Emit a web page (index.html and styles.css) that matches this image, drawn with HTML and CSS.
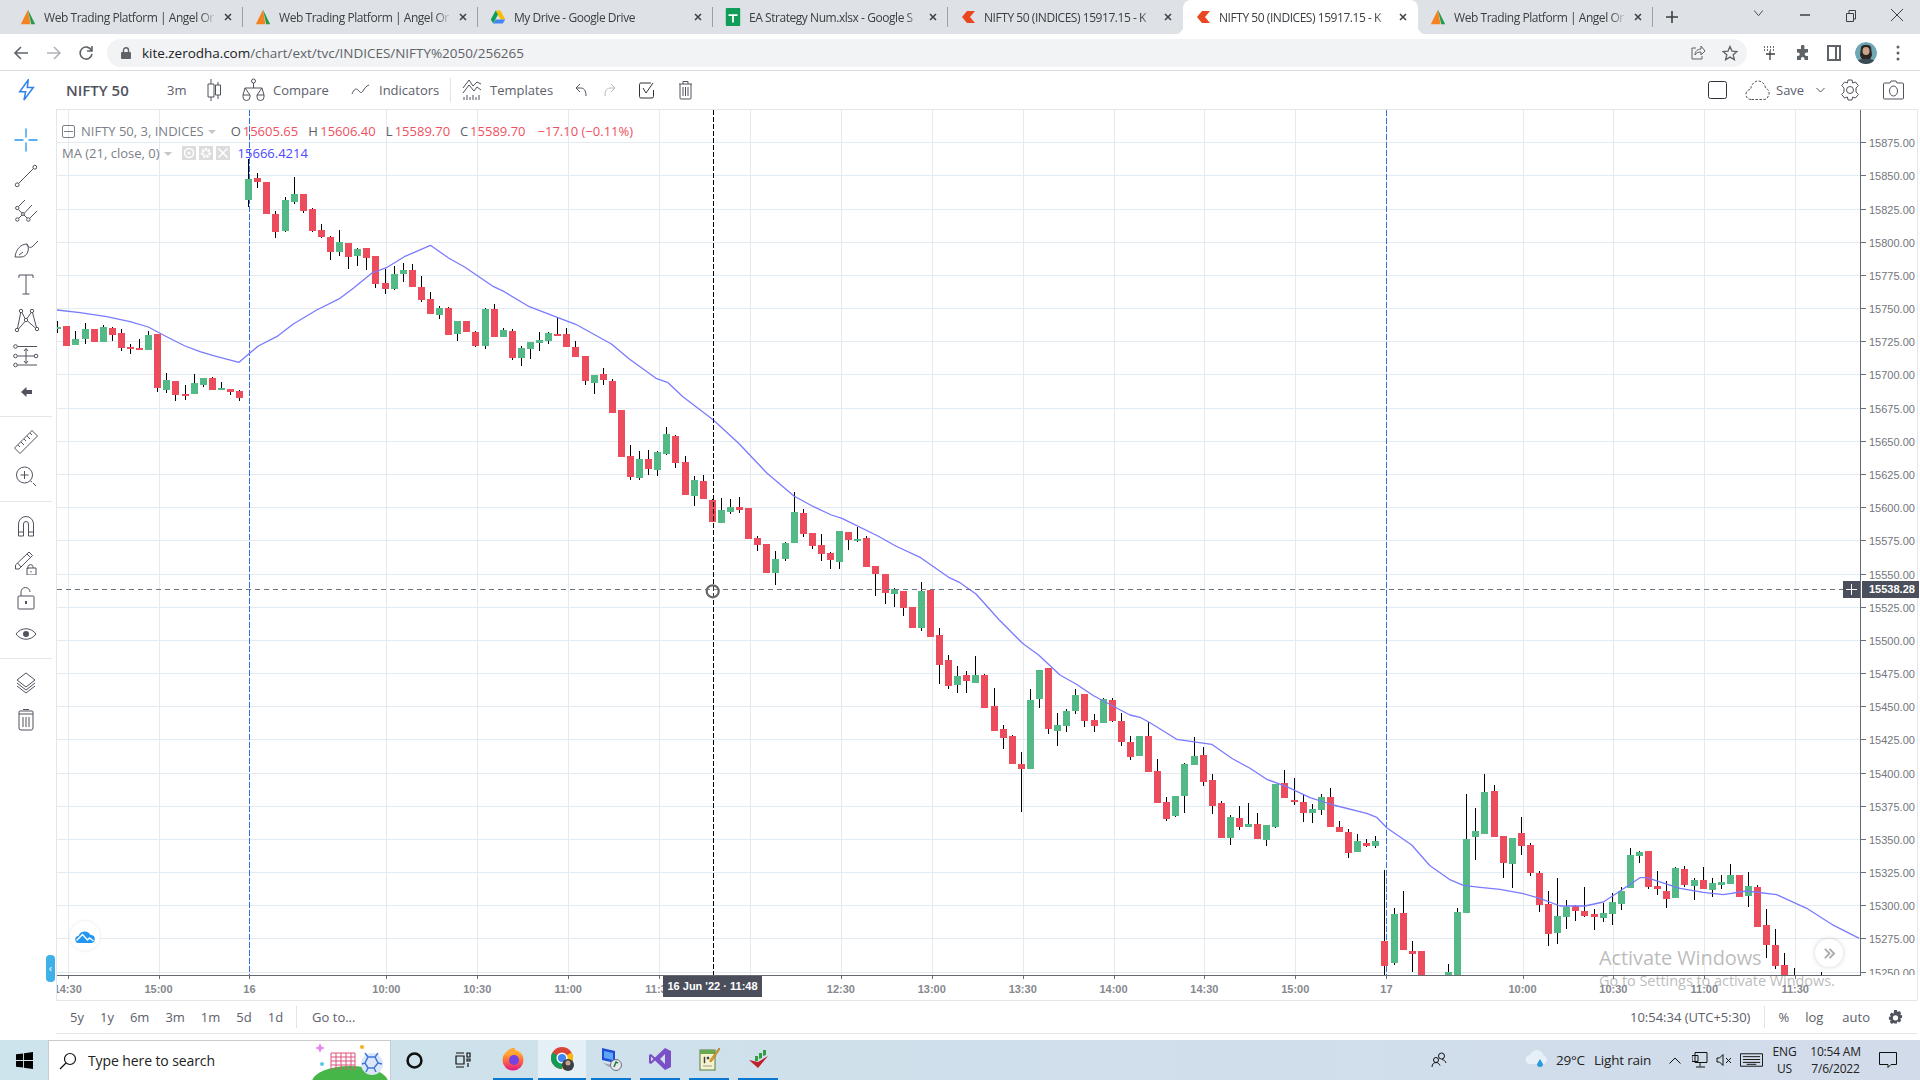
FILE: index.html
```html
<!DOCTYPE html>
<html lang="en">
<head>
<meta charset="utf-8">
<title>NIFTY 50 (INDICES) 15917.15 - Kite</title>
<link rel="stylesheet" href="styles.css">
</head>
<body>
<div class="tabstrip">
  <div class="tab sep"><svg class="fav" viewBox="0 0 20 20"><path class="angel-o" d="M10 1 1 19h12z"/><path class="angel-g" d="M10 1l9 18h-5z"/></svg><span class="title">Web Trading Platform | Angel Or</span><svg class="close" viewBox="0 0 8 8"><path d="M1 1l6 6M7 1L1 7"/></svg></div>
  <div class="tab sep"><svg class="fav" viewBox="0 0 20 20"><path class="angel-o" d="M10 1 1 19h12z"/><path class="angel-g" d="M10 1l9 18h-5z"/></svg><span class="title">Web Trading Platform | Angel Or</span><svg class="close" viewBox="0 0 8 8"><path d="M1 1l6 6M7 1L1 7"/></svg></div>
  <div class="tab sep"><svg class="fav" viewBox="0 0 20 20"><path class="dr-y" d="M7 2h6l6 11h-6z"/><path class="dr-g" d="M7 2 1 13l3 5 6-11z"/><path class="dr-b" d="M4 18h12l3-5H7z"/></svg><span class="title">My Drive - Google Drive</span><svg class="close" viewBox="0 0 8 8"><path d="M1 1l6 6M7 1L1 7"/></svg></div>
  <div class="tab sep"><svg class="fav" viewBox="0 0 16 20"><rect class="sh-bg" x="0" y="0" width="16" height="20" rx="1"/><path class="sh-fg" d="M3 7h10v2H9v7H7V9H3z"/></svg><span class="title">EA Strategy Num.xlsx - Google S</span><svg class="close" viewBox="0 0 8 8"><path d="M1 1l6 6M7 1L1 7"/></svg></div>
  <div class="tab"><svg class="fav" viewBox="0 0 16 16"><path class="ze" d="M7 2h8L10 8l5 6H7L2 8z"/></svg><span class="title">NIFTY 50 (INDICES) 15917.15 - K</span><svg class="close" viewBox="0 0 8 8"><path d="M1 1l6 6M7 1L1 7"/></svg></div>
  <div class="tab active"><svg class="fav" viewBox="0 0 16 16"><path class="ze" d="M7 2h8L10 8l5 6H7L2 8z"/></svg><span class="title">NIFTY 50 (INDICES) 15917.15 - K</span><svg class="close" viewBox="0 0 8 8"><path d="M1 1l6 6M7 1L1 7"/></svg></div>
  <div class="tab sep"><svg class="fav" viewBox="0 0 20 20"><path class="angel-o" d="M10 1 1 19h12z"/><path class="angel-g" d="M10 1l9 18h-5z"/></svg><span class="title">Web Trading Platform | Angel Or</span><svg class="close" viewBox="0 0 8 8"><path d="M1 1l6 6M7 1L1 7"/></svg></div>
  <svg class="newtab" viewBox="0 0 12 12"><path d="M6 0v12M0 6h12"/></svg>
  <div class="winctl">
    <svg class="wc-down" viewBox="0 0 10 6"><path d="M0 0l5 6 5-6"/></svg>
    <svg class="wc-min" viewBox="0 0 10 2"><path d="M0 1h10"/></svg>
    <svg class="wc-max" viewBox="0 0 10 12"><path d="M.5 3.500h7v8h-7zM3 3V.5h6.500V9H8"/></svg>
    <svg class="wc-x" viewBox="0 0 12 12"><path d="M0 0l12 12M12 0 0 12"/></svg>
  </div>
</div>

<div class="addrbar">
  <svg class="nav nav-back" viewBox="0 0 16 16"><path d="M15 8H2M8 2 2 8l6 6"/></svg>
  <svg class="nav nav-fwd" viewBox="0 0 16 16"><path d="M1 8h13M8 2l6 6-6 6"/></svg>
  <svg class="nav nav-rel" viewBox="0 0 16 16"><path d="M13.500 5.500A6 6 0 1 0 14 9M14 1v5H9"/></svg>
  <div class="omni">
    <svg class="lock" viewBox="0 0 10 12"><path d="M2.500 5V3.200a2.500 2.500 0 0 1 5 0V5" class="lock-s"/><rect class="lock-b" y="5" width="10" height="7" rx="1"/></svg>
    <span class="url"><span class="host">kite.zerodha.com</span>/chart/ext/tvc/INDICES/NIFTY%2050/256265</span>
    <svg class="om-share" viewBox="0 0 16 16"><path d="M6 3H2v11h10v-3M5 10c0-4 3-6 6-6V1l4 5-4 4V7c-3 0-5 1-6 3z"/></svg>
    <svg class="om-star" viewBox="0 0 16 16"><path d="M8 1.500l2 4.600 5 .4-3.800 3.300 1.200 4.800L8 12.100 3.600 14.600l1.200-4.800L1 6.500l5-.4z"/></svg>
  </div>
  <svg class="ext ext-a" viewBox="0 0 14 14"><path d="M1 1h1M4 1h1M7 1h1M10 1h1M1 4h1M4 4h1M7 4h1M10 4h1M3 8h9M7 5v9"/></svg>
  <svg class="ext ext-b" viewBox="0 0 16 16"><path d="M6 1.500a1.700 1.700 0 0 1 3.400 0V4h3.600v3.500h-1.500a1.800 1.800 0 0 0 0 3.600H13V15H9.500v-1.200a1.800 1.800 0 0 0-3.600 0V15H2v-4h1a1.800 1.800 0 0 0 0-3.600H2V4h4z"/></svg>
  <svg class="ext ext-c" viewBox="0 0 14 16"><path d="M1 1h12v14H1zM9 1v14"/></svg>
  <svg class="avatar" viewBox="0 0 22 22"><circle cx="11" cy="11" r="11" class="av-bg"/><ellipse cx="11" cy="10" rx="5" ry="6.500" class="av-face"/><path d="M6 5c1-3 9-3 10 0l1 8c-1 3-2 5-6 5s-5-2-6-5z" class="av-hair"/><ellipse cx="11" cy="9" rx="3.500" ry="4" class="av-face"/><path d="M2 19c3-3 15-3 18 0l-4 3H6z" class="av-shirt"/></svg>
  <svg class="menu3" viewBox="0 0 4 16"><circle cx="2" cy="2" r="1.500"/><circle cx="2" cy="8" r="1.500"/><circle cx="2" cy="14" r="1.500"/></svg>
</div>

<div class="kitebar">
  <svg class="k-bolt" viewBox="0 0 20 26"><path d="M12 1 2 15h7l-2 10 11-15h-7z"/></svg>
  <span class="k-sym">NIFTY 50</span>
  <span class="k-txt k-tf">3m</span>
  <svg class="ki k-candle" viewBox="0 0 14 24"><path d="M4 1v5M4 19v4M1 6h6v13H1zM11 4v3M11 17v4M8.500 7h5v10h-5z"/></svg>
  <svg class="ki k-cmp" viewBox="0 0 23 24"><circle cx="11.500" cy="3" r="2"/><path d="M11.500 5v5M3 10h17M3 10 1 17M3 10l5 7M20 10l-5 7M20 10l2 7M1 17h7v2a3.500 3.500 0 0 1-7 0zM15 17h7v2a3.500 3.500 0 0 1-7 0z"/></svg>
  <span class="k-txt k-cmpt">Compare</span>
  <svg class="ki k-ind" viewBox="0 0 19 12"><path d="M1 10c2-5 4-6 6-4s3 4 5 1 3-5 6-6"/></svg>
  <span class="k-txt k-indt">Indicators</span>
  <span class="k-sep"></span>
  <svg class="ki k-tpl" viewBox="0 0 20 24"><path d="M1 10 7 2l4 6 4-4 4 2M1 15l6-8 5 6 3-4 4 3M2 22v-3M5 22v-5M8 22v-3M11 22v-5M14 22v-3M17 22v-5"/></svg>
  <span class="k-txt k-tplt">Templates</span>
  <svg class="ki k-undo" viewBox="0 0 12 14"><path d="M5 1 1 5l4 4M1 5h4c4 0 6 2 6 8"/></svg>
  <svg class="ki k-redo" viewBox="0 0 12 14"><path d="M7 1l4 4-4 4M11 5H7c-4 0-6 2-6 8"/></svg>
  <svg class="ki k-check" viewBox="0 0 15 17"><path d="M12 1H2a1.500 1.500 0 0 0-1.500 1.500v12A1.500 1.500 0 0 0 2 16h11a1.500 1.500 0 0 0 1.500-1.500V8M4 6l3 5 7-10" class="k-dark"/></svg>
  <svg class="ki k-trash" viewBox="0 0 15 20"><path d="M1 4h13M5 4V1.500h5V4M2 4v14a1 1 0 0 0 1 1h9a1 1 0 0 0 1-1V4M5 7v9M7.500 7v9M10 7v9"/></svg>
  <svg class="ki k-rect" viewBox="0 0 19 18"><rect x=".5" y=".5" width="18" height="17" rx="2" class="k-dark"/></svg>
  <svg class="ki k-cloud" viewBox="0 0 25 20"><path d="M6 19.500c-3 0-5-2-5-5s2-5 4.500-5C6 5 9 1 13 1s7 3 7.500 7c2.500 1 4 3.500 3.500 6s-2 5.500-5 5.500z" stroke-dasharray="2.500 1.500"/></svg>
  <span class="k-txt k-save">Save</span>
  <svg class="ki k-chev" viewBox="0 0 9 6"><path d="M.5 1l4 4 4-4"/></svg>
  <svg class="ki k-gear" viewBox="0 0 20 22"><circle cx="10" cy="11" r="3.500"/><path d="M8 1h4l.6 3 2.800-1 3 3.600L16 9v4l2.400 2.400-3 3.600-2.800-1L12 21H8l-.6-3-2.800 1-3-3.600L4 13V9L1.600 6.600l3-3.600 2.800 1z"/></svg>
  <svg class="ki k-cam" viewBox="0 0 21 20"><path d="M7 3 8 1h5l1 2h5.500a1 1 0 0 1 1 1v14a1 1 0 0 1-1 1H1.500a1 1 0 0 1-1-1V4a1 1 0 0 1 1-1z"/><ellipse cx="10.500" cy="11" rx="4" ry="5"/></svg>
</div>

<main class="workspace">
  <nav class="tools">
    <svg class="tool tool-blue" viewBox="0 0 26 26"><path d="M13 1.500v9M13 15.500v9M1.500 13h9M15.500 13h9"/></svg>
    <svg class="tool" viewBox="0 0 26 26"><path d="M5.500 20.500 20.500 5.500"/><circle cx="4.200" cy="21.800" r="1.900"/><circle cx="21.800" cy="4.200" r="1.900"/></svg>
    <svg class="tool" viewBox="0 0 26 26"><circle cx="4.300" cy="9" r="1.700"/><circle cx="4.300" cy="20.500" r="1.700"/><circle cx="15.300" cy="20.500" r="1.700"/><circle cx="10" cy="15" r="1.400"/><path d="M5.500 7.500 12 1M11.500 14 19 6M5.500 19.500 9 16M16.500 19.500 24 12M5.500 10.500 8.800 14M11 16 14 19"/></svg>
    <svg class="tool" viewBox="0 0 26 26"><path d="M2 22C3 14 8 9 14 9c3 4 1 13-6 13zM14 9c0 3 3 4 5 3l6-6M6 20l4-3"/></svg>
    <svg class="tool" viewBox="0 0 26 26"><path d="M6 7V4h14v3M13 4v19M9.500 23h7"/></svg>
    <svg class="tool" viewBox="0 0 26 26"><circle cx="4" cy="23" r="1.700"/><circle cx="8" cy="4" r="1.700"/><circle cx="13" cy="13" r="1.700"/><circle cx="19" cy="4" r="1.700"/><circle cx="24" cy="22" r="1.700"/><path d="M4.500 21.500 7.700 5.600M9 5.500l3 6M14 11.500l4.200-6M19.500 5.600 23.500 20.500M5.500 22 12 14.500M14.500 14 22.500 21"/></svg>
    <svg class="tool" viewBox="0 0 26 26"><circle cx="2.500" cy="3.500" r="1.800"/><circle cx="2.500" cy="13" r="1.800"/><circle cx="2.500" cy="22" r="1.800"/><circle cx="23" cy="13" r="1.800"/><path d="M4.500 3.500H24M4.500 13H21M4.500 22H24M13 6v14M11 8l2-2.500L15 8M11 18l2 2.500 2-2.500"/></svg>
    <svg class="tool tool-solid" viewBox="0 0 26 26"><path d="M8 13l5.500-5v3H19v4h-5.500v3z"/></svg>
    <span class="tool-sep"></span>
    <svg class="tool" viewBox="0 0 26 26"><path d="M1.500 20 19 2.500l5.500 5.500L7 25.500zM5 17l2 2M8 14l3 3M11 11l2 2M14 8l3 3M17 5l2 2"/></svg>
    <svg class="tool" viewBox="0 0 26 26"><circle cx="11.500" cy="11" r="8"/><path d="M11.500 7v8M7.500 11h8M17.500 17l1.500 1M20 19l3 3"/></svg>
    <span class="tool-sep"></span>
    <svg class="tool" viewBox="0 0 26 26"><path d="M5.500 23V11a7.500 7.500 0 0 1 15 0v12h-5V11a2.500 2.500 0 0 0-5 0v12zM5.500 19h5M15.500 19h5"/></svg>
    <svg class="tool" viewBox="0 0 26 26"><path d="M2.500 16 16 3l3.500 3.500L6 20H2.500zM4.500 14l3.500 4M14 5l3.500 3.500M15 20v-2.500a2.600 2.600 0 0 1 5 0V19M14 19h9v7h-9zM18 22v1.500"/></svg>
    <svg class="tool" viewBox="0 0 26 26"><path d="M8 11V7a4.500 4.500 0 0 1 9 0M6 11h14a1 1 0 0 1 1 1v11a1 1 0 0 1-1 1H6a1 1 0 0 1-1-1V12a1 1 0 0 1 1-1z"/><rect class="tool-fill" x="12" y="16" width="2" height="3"/></svg>
    <svg class="tool" viewBox="0 0 26 26"><path d="M3 13C8 6 18 6 23 13 18 20 8 20 3 13z"/><circle class="tool-fill" cx="13" cy="13" r="3"/></svg>
    <span class="tool-sep"></span>
    <svg class="tool" viewBox="0 0 26 26"><path d="M13 3l9 7-9 7-9-7zM4 13l9 7 9-7M4 16l9 7 9-7"/></svg>
    <svg class="tool" viewBox="0 0 26 26"><path d="M7 5h12a1 1 0 0 1 1 1v16a2 2 0 0 1-2 2H8a2 2 0 0 1-2-2V6a1 1 0 0 1 1-1zM6 8h14M10 3.500h6M10 11v10M13 11v10M16 11v10"/></svg>
  </nav>
  <section class="chart">
    <svg id="canvas" class="canvas" viewBox="56 109 1864 891" width="1864" height="891"></svg>
    <div class="legend">
      <div class="leg-row">
        <span class="leg-box"></span><span class="leg-name">NIFTY 50, 3, INDICES</span><span class="leg-caret"></span>
        <span class="leg-k leg-o">O</span><span class="leg-v">15605.65</span>
        <span class="leg-k leg-h">H</span><span class="leg-v">15606.40</span>
        <span class="leg-k leg-l">L</span><span class="leg-v">15589.70</span>
        <span class="leg-k leg-c">C</span><span class="leg-v">15589.70</span>
        <span class="leg-v leg-chg">−17.10 (−0.11%)</span>
      </div>
      <div class="leg-row leg-ma">
        <span class="leg-name">MA (21, close, 0)</span><span class="leg-caret"></span>
        <span class="leg-btn"><svg viewBox="0 0 14 14"><circle cx="7" cy="7" r="4.500"/><circle cx="7" cy="7" r="1.500" class="leg-dot"/></svg></span>
        <span class="leg-btn"><svg viewBox="0 0 14 14"><circle cx="7" cy="7" r="3.500" stroke-dasharray="2 1" stroke-width="3"/></svg></span>
        <span class="leg-btn"><svg viewBox="0 0 14 14"><path d="M2.500 2.500l9 9M11.500 2.500l-9 9"/></svg></span>
        <span class="leg-mav">15666.4214</span>
      </div>
    </div>
    <div class="cloudbtn"><svg viewBox="0 0 20 13"><path class="cl-body" d="M4 13a3.500 3.500 0 0 1-.5-7A6.500 6.500 0 0 1 15.500 5 4 4 0 0 1 16 13z"/><path class="cl-wave" d="M1.500 10.500 7.500 4.500 12.500 10 14.500 8 18.500 11"/></svg></div>
    <div class="scrollpill">‹</div>
    <div class="nextbtn"><svg viewBox="0 0 14 14"><path d="M2 2l5 5-5 5M7 2l5 5-5 5"/></svg></div>
    <div class="activate">
      <div class="act-1">Activate Windows</div>
      <div class="act-2">Go to Settings to activate Windows.</div>
    </div>
  </section>
</main>

<div class="rangebar">
  <span class="rng">5y</span><span class="rng">1y</span><span class="rng">6m</span><span class="rng">3m</span><span class="rng">1m</span><span class="rng">5d</span><span class="rng">1d</span>
  <span class="rng-sep"></span><span class="rng">Go to...</span>
  <span class="rng rng-time">10:54:34 (UTC+5:30)</span><span class="rng-sep rng-sep2"></span>
  <span class="rng rng-pct">%</span><span class="rng rng-log">log</span><span class="rng rng-auto">auto</span>
  <svg class="rng-gear" viewBox="0 0 16 16"><path d="M6.500 0h3l.5 2.200 2-1.200 2.100 2.100-1.200 2 2.100.5v3l-2.100.5 1.200 2-2.100 2.100-2-1.200-.5 2.300h-3L6 13.700l-2 1.200-2.100-2.100 1.200-2L1 10.300v-3l2.100-.5-1.200-2L4 2.700l2 1.200zM8 5.500a2.800 2.800 0 1 0 0 5.600 2.800 2.800 0 0 0 0-5.600z"/></svg>
</div>
<div class="gapline"></div>

<footer class="taskbar">
  <svg class="winlogo" viewBox="0 0 18 18"><path d="M0 2.500 7.500 1.500V8.500H0zM8.500 1.300 18 0V8.500H8.500zM0 9.500H7.500V16.500L0 15.500zM8.500 9.500H18V18L8.500 16.700z"/></svg>
  <div class="search">
    <svg class="s-ic" viewBox="0 0 18 18"><circle cx="11" cy="7" r="5.500"/><path d="M7 11l-6 6"/></svg>
    <span class="s-txt">Type here to search</span>
    <svg class="doodle" viewBox="0 0 76 40">
      <ellipse cx="38" cy="42" rx="38" ry="16" class="d-hill"/>
      <path d="M19 30V13h24v17M19 17h24M19 21h24M19 25h24M24 13v17M29 13v17M34 13v17M39 13v17" class="d-goal"/>
      <circle cx="60" cy="24" r="11" class="d-ball"/><path d="M56 17h7l3 6-4 5h-6l-3-5zM56 17l-3-4M63 17l3-4M53 23l-3 1M66 23l4 1M56 28l-2 4M62 28l2 4" class="d-lines"/>
      <path d="M8 3l1.500 3.500L13 8 9.500 9.500 8 13 6.500 9.500 3 8l3.500-1.500z" class="d-star"/><circle cx="50" cy="7" r="2" class="d-sun"/><circle cx="10" cy="24" r="2" class="d-blue"/>
    </svg>
  </div>
  <svg class="cortana" viewBox="0 0 16 16"><circle cx="8" cy="8" r="6.500"/></svg>
  <svg class="taskview" viewBox="0 0 16 16"><path d="M1 1h8M1 15h8M1 4h8v8H1zM12 1h3v4h-3zM12 7h3v2h-3zM13 11v4"/></svg>
  <div class="app"><svg viewBox="0 0 24 24"><defs><linearGradient id="ffg" x1="0" y1="0" x2="0" y2="1"><stop offset="0" stop-color="#ffca28"/><stop offset=".5" stop-color="#ff7139"/><stop offset="1" stop-color="#e31587"/></linearGradient></defs><circle cx="12" cy="13" r="10.500" fill="url(#ffg)"/><circle cx="13" cy="13" r="5" fill="#7542e5"/><path d="M5 6c3-5 7-5 9-5-1 2 0 3 3 5-5-1-9 0-12 0z" fill="#ffa436"/></svg></div>
  <div class="app app-on"><svg viewBox="0 0 24 24"><circle cx="12" cy="11" r="11" fill="#db4437"/><path d="M12 11 2.500 5.500A11 11 0 0 0 12 22z" fill="#0f9d58"/><path d="M12 11l9.500-5.500A11 11 0 0 1 12 22z" fill="#fbbc05"/><circle cx="12" cy="11" r="4.800" fill="#4285f4" stroke="#fff" stroke-width="1.500"/><circle cx="18" cy="18" r="6" fill="#3a3f45"/><circle cx="18" cy="16" r="2.500" fill="#c9a48a"/></svg></div>
  <div class="app"><svg viewBox="0 0 24 24"><path d="M3 1l13 3v12L3 13z" fill="#1d4ed8"/><path d="M5 4l9 2v7L5 11z" fill="#60a5fa"/><path d="M4 16l9 2-3 2z" fill="#9ca3af"/><circle cx="17" cy="18" r="5.500" fill="#e5e7eb" stroke="#6b7280"/><path d="M15 20l2-5 2 1" stroke="#1f7a3d" stroke-width="1.500" fill="none"/></svg></div>
  <div class="app"><svg viewBox="0 0 24 24"><path d="M17 1l6 3v16l-6 3L7 13.500 3 17l-2-1V8l2-1 4 3.500zM17 7l-5 5 5 5zM3 9.500v5L5.500 12z" fill="#7b4fc7"/></svg></div>
  <div class="app"><svg viewBox="0 0 24 24"><rect x="3" y="3" width="15" height="20" fill="#f5f3cf" stroke="#5a7d3a"/><rect x="3" y="3" width="15" height="4" fill="#6aa84f"/><path d="M7 10h1v6H7zM10 10h2v2h-2zM6 19h9" fill="#444" stroke="#444" stroke-width=".5"/><path d="M22 1l1 1-8 12-2 1 0-2z" fill="#e9a020" stroke="#8a5a10" stroke-width=".5"/></svg></div>
  <div class="app"><svg viewBox="0 0 24 24"><path d="M3 13l9 8L22 9l-10 6z" fill="#c0202c"/><path d="M9 14V9h3v5zM13 12V6h3v5zM17 9V3h3v5z" fill="#2e9e3e"/></svg></div>
  <div class="tray">
    <svg class="tr tr-person" viewBox="0 0 16 16"><circle cx="10.500" cy="4" r="3"/><circle cx="5" cy="8" r="2.500"/><path d="M1 15c0-3 2-4.500 4-4.500s3 1 4 3M11 7.500c2 .5 3.500 1.500 4 3.500"/></svg>
    <svg class="tr-weather" viewBox="0 0 24 20"><path d="M5 14a4.500 4.500 0 0 1 0-9c1-3 4-5 7-5s6 3 6.500 5.500A4.500 4.500 0 0 1 19 14z" fill="#e7f0f8"/><path d="M15 9l3 5a3 3 0 1 1-6 0z" fill="#2a9bd8"/></svg>
    <span class="tr-t tr-temp">29°C</span><span class="tr-t tr-rain">Light rain</span>
    <svg class="tr tr-up" viewBox="0 0 12 7"><path d="M.5 6.500 6 1l5.500 5.500"/></svg>
    <svg class="tr tr-net" viewBox="0 0 16 16"><path d="M3 .5h12v10H3zM0 3.500h6v6H0zM8 10.500v4M4 15h9"/></svg>
    <svg class="tr tr-spk" viewBox="0 0 16 14"><path d="M1 5h2.500L7 1.500v11L3.500 9H1zM10 5l5 5M15 5l-5 5"/></svg>
    <svg class="tr tr-kbd" viewBox="0 0 24 14"><path d="M.5.500h23v13H.5zM3 3.500h18M3 6.500h18M3 9.500h18" /><path d="M7 11.500h10"/></svg>
    <div class="tr-lang"><span>ENG</span><span>US</span></div>
    <div class="tr-clock"><span>10:54 AM</span><span>7/6/2022</span></div>
    <svg class="tr tr-note" viewBox="0 0 18 16"><path d="M.5.500h17v12h-5.500L9 15.500V12.500H.5z"/></svg>
  </div>
</footer>
<script src="chart.js"></script>
</body>
</html>
```
FILE: styles.css
```css
* { box-sizing: border-box; }
html, body { margin: 0; height: 100%; }
body {
  width: 1920px; height: 1080px; overflow: hidden; background: #fff;
  display: flex; flex-direction: column;
  font-family: "Open Sans", "Noto Sans", sans-serif; color: #50535e;
}
svg { display: block; flex: none; fill: none; }

/* browser tabs */
.tabstrip { height: 34px; background: #dee1e6; display: flex; align-items: stretch; padding-left: 8px; flex: none; }
.tab { width: 235px; flex: none; position: relative; display: flex; align-items: center; }
.tab.sep::after { content: ""; position: absolute; right: 0; top: 7px; height: 20px; width: 1px; background: #9aa0a6; }
.tab.active { background: #fff; border-radius: 8px 8px 0 0; }
.tab.active::before { content: ""; position: absolute; left: -8px; bottom: 0; width: 8px; height: 8px; background: radial-gradient(circle at 0 0, #dee1e6 8px, #fff 8.500px); }
.tab.active::after { content: ""; position: absolute; right: -8px; bottom: 0; width: 8px; height: 8px; background: radial-gradient(circle at 100% 0, #dee1e6 8px, #fff 8.500px); }
.fav { position: absolute; left: 12px; top: 8px; width: 16px; height: 18px; }
.angel-o { fill: #f58220; } .angel-g { fill: #1f9e4a; }
.dr-y { fill: #fbbc04; } .dr-g { fill: #0f9d58; } .dr-b { fill: #4285f4; }
.sh-bg { fill: #0f9d58; } .sh-fg { fill: #fff; }
.ze { fill: #e8471f; }
.title {
  position: absolute; left: 36px; width: 178px; white-space: nowrap; overflow: hidden;
  font-size: 12px; letter-spacing: -.45px; color: #3c4043;
  -webkit-mask-image: linear-gradient(90deg, #000 88%, transparent 97%);
  mask-image: linear-gradient(90deg, #000 88%, transparent 97%);
}
.close { position: absolute; left: 216px; top: 13px; width: 8px; height: 8px; stroke: #3c4043; stroke-width: 1.5; }
.newtab { width: 12px; height: 12px; margin: 11px 0 0 13px; stroke: #3c4043; stroke-width: 1.6; }
.winctl { margin-left: auto; position: relative; width: 168px; flex: none; }
.winctl svg { position: absolute; stroke: #3c4043; stroke-width: 1; }
.wc-down { left: 2px; top: 10px; width: 9px; height: 6px; }
.wc-min { left: 48px; top: 14px; width: 10px; height: 2px; stroke-width: 1.5 !important; }
.wc-max { left: 94px; top: 10px; width: 10px; height: 12px; }
.wc-x { left: 139px; top: 9px; width: 12px; height: 12px; }

/* address bar */
.addrbar { height: 37px; border-bottom: 1px solid #dadce0; display: flex; align-items: center; flex: none; padding-top: 1px; }
.nav { width: 16px; height: 16px; stroke-width: 1.6; stroke: #5f6368; }
.nav-back { margin-left: 13px; }
.nav-fwd { margin-left: 17px; stroke: #b0b3b8; }
.nav-rel { margin-left: 16px; }
.omni { width: 1640px; margin-left: 13px; height: 28px; background: #f1f3f4; border-radius: 14px; display: flex; align-items: center; padding-left: 14px; }
.lock { width: 10px; height: 12px; margin-left: 0; }
.lock-s { stroke: #5f6368; stroke-width: 1.4; } .lock-b { fill: #5f6368; }
.url { margin-left: 11px; font-size: 13.5px; color: #5f6368; white-space: nowrap; letter-spacing: -.03px; }
.host { color: #202124; }
.om-share { width: 16px; height: 16px; margin-left: auto; stroke: #5f6368; stroke-width: 1; }
.om-star { width: 16px; height: 16px; margin: 0 9px 0 16px; stroke: #5f6368; stroke-width: 1.3; }
.ext-a { width: 14px; height: 14px; margin-left: 16px; stroke: #3c4043; stroke-width: 1.3; }
.ext-b { width: 16px; height: 16px; margin-left: 18px; fill: #5f6368; }
.ext-c { width: 14px; height: 16px; margin-left: 16px; stroke: #5f6368; stroke-width: 2; }
.avatar { width: 22px; height: 22px; margin-left: 14px; border-radius: 50%; }
.av-bg { fill: #6fa8b5; } .av-face { fill: #c9a48a; } .av-hair { fill: #2d2622; } .av-shirt { fill: #3b4a55; }
.menu3 { width: 4px; height: 16px; margin-left: 19px; fill: #5f6368; }

/* kite toolbar */
.kitebar { height: 38px; display: flex; align-items: center; flex: none; padding-left: 18px; }
.ki { stroke: #50535e; stroke-width: 1; }
.k-dark { stroke: #2f323a; }
.k-bolt { width: 17px; height: 22px; stroke: #2f80ed; stroke-width: 1.8; }
.k-sym { margin-left: 31px; font-size: 15px; font-weight: 600; width: 64px; color: #50535e; white-space: nowrap; }
.k-txt { font-size: 13px; color: #5d606b; white-space: nowrap; }
.k-tf { margin-left: 37px; width: 21px; }
.k-candle { width: 14px; height: 24px; margin-left: 19px; }
.k-cmp { width: 23px; height: 24px; margin-left: 21px; }
.k-cmpt { margin-left: 8px; width: 56px; }
.k-ind { width: 19px; height: 12px; margin-left: 22px; }
.k-indt { margin-left: 9px; width: 60px; }
.k-sep { width: 1px; height: 24px; background: #e0e3eb; margin-left: 11px; }
.k-tpl { width: 20px; height: 24px; margin-left: 11px; }
.k-tplt { margin-left: 8px; width: 63px; }
.k-undo { width: 12px; height: 14px; margin-left: 22px; }
.k-redo { width: 12px; height: 14px; margin-left: 17px; stroke: #b5b8c0; }
.k-check { width: 15px; height: 17px; margin-left: 23px; }
.k-trash { width: 15px; height: 20px; margin-left: 24px; }
.k-rect { width: 19px; height: 18px; margin-left: auto; }
.k-cloud { width: 25px; height: 20px; margin-left: 18px; }
.k-save { margin-left: 6px; width: 28px; }
.k-chev { width: 9px; height: 6px; margin-left: 12px; }
.k-gear { width: 20px; height: 22px; margin-left: 15px; }
.k-cam { width: 21px; height: 20px; margin: 0 16px 0 23px; }

/* workspace */
.workspace { flex: none; height: 891px; display: flex; }
.tools { width: 56px; flex: none; display: flex; flex-direction: column; align-items: flex-start; padding-top: 13px; }
.tool { width: 26px; height: 36px; margin-left: 13px; stroke: #50535e; stroke-width: 1; padding: 5px 0; }
.tool-blue { stroke: #2196f3; stroke-width: 1.3; }
.tool-solid { fill: #50535e; stroke: none; }
.tool-fill { fill: #50535e; stroke: none; }
.tool-sep { width: 52px; height: 1px; background: #e6e6e6; margin: 6px 0; flex: none; }

.chart { position: relative; width: 1864px; flex: none; }
.canvas { display: block; }
.grid { stroke: #e3ebf2; stroke-width: 1; shape-rendering: crispEdges; }
.frame { stroke: #e4e6e8; stroke-width: 1; shape-rendering: crispEdges; }
.axis { stroke: #666a70; stroke-width: 1.4; shape-rendering: crispEdges; }
.tick { stroke: #6b6f75; stroke-width: 1; shape-rendering: crispEdges; }
.wick { fill: #000; shape-rendering: crispEdges; }
.up { fill: #53b987; shape-rendering: crispEdges; }
.dn { fill: #eb4d5c; shape-rendering: crispEdges; }
.ma { fill: none; stroke: #7a7aff; stroke-width: 1.3; stroke-linejoin: round; }
.brk { stroke: #2f72d8; stroke-width: 1; stroke-dasharray: 6 2; shape-rendering: crispEdges; }
.cross-v { stroke: #000; stroke-width: 1; stroke-dasharray: 5 2; shape-rendering: crispEdges; }
.cross-h { stroke: #6f7580; stroke-width: 1; stroke-dasharray: 5 4; shape-rendering: crispEdges; }
.cross-o { fill: rgba(255,255,255,.2); stroke: #666; stroke-width: 2.2; }
.plabel { font: 11px "Liberation Sans", Arial, sans-serif; fill: #73767d; }
.tlabel { font: bold 11px "Liberation Sans", Arial, sans-serif; fill: #85888e; text-anchor: middle; }
.tag { fill: #4a4f5b; }
.tagtxt { font: bold 11px "Liberation Sans", Arial, sans-serif; fill: #fff; }
.tagmid { text-anchor: middle; }
.tagplus { stroke: #fff; stroke-width: 1; shape-rendering: crispEdges; }

/* legend over chart */
.legend { position: absolute; left: 6px; top: 11px; font-size: 13px; color: #7c7f87; line-height: 22px; }
.leg-row { display: flex; align-items: center; height: 22px; white-space: nowrap; }
.leg-box { width: 13px; height: 13px; border: 1px solid #7d8087; border-radius: 2px; position: relative; margin-right: 6px; background: linear-gradient(#7d8087,#7d8087) center/9px 1px no-repeat; }
.leg-name { color: #7c7f87; }
.leg-caret { width: 0; height: 0; border: 4px solid transparent; border-top: 4px solid #c3c5ca; margin: 5px 0 0 4px; }
.leg-k { color: #5d606b; }
.leg-o { margin-left: 15px; width: 12px; }
.leg-h { margin-left: 10px; width: 12px; }
.leg-l { margin-left: 10px; width: 9px; }
.leg-c { margin-left: 10px; width: 10px; }
.leg-v { color: #ef5061; }
.leg-chg { margin-left: 12px; }
.leg-btn { width: 14px; height: 14px; background: #dcdcdc; margin-right: 3px; flex: none; }
.leg-btn svg { width: 14px; height: 14px; stroke: #fff; stroke-width: 1.5; }
.leg-dot { fill: #fff; stroke: none; }
.leg-ma .leg-caret { margin-right: 10px; }
.leg-mav { color: #4a4aff; margin-left: 5px; }

.cloudbtn { position: absolute; left: 14px; top: 812px; width: 30px; height: 30px; border-radius: 50%; background: #fff; box-shadow: 0 0 3px rgba(0,0,0,.12); display: flex; align-items: center; justify-content: center; }
.cloudbtn svg { width: 20px; height: 13px; }
.cl-body { fill: #2196f3; }
.cl-wave { stroke: #fff; stroke-width: 1.5; }
.scrollpill { position: absolute; left: -10px; top: 846px; width: 9px; height: 27px; background: #3fb0e8; border-radius: 4px; color: #fff; font-size: 11px; line-height: 25px; text-align: center; }
.nextbtn { position: absolute; left: 1759px; top: 830px; width: 28px; height: 28px; border-radius: 50%; background: #fff; box-shadow: 0 0 5px rgba(0,0,0,.18); display: flex; align-items: center; justify-content: center; }
.nextbtn svg { width: 13px; height: 13px; stroke: #aaa; stroke-width: 2; }
.activate { position: absolute; left: 1543px; top: 837px; color: rgba(120,120,120,.5); white-space: nowrap; pointer-events: none; }
.act-1 { font-size: 20px; line-height: 24px; letter-spacing: -.1px; }
.act-2 { font-size: 14.500px; line-height: 20px; margin-top: 1px; letter-spacing: -.05px; }

/* range bar */
.rangebar { margin-left: 56px; height: 34px; width: 1861px; border-top: 1px solid #e4e6e8; border-bottom: 1px solid #e4e6e8; flex: none; display: flex; align-items: center; padding-left: 14px; gap: 16px; }
.rng { font-size: 13px; color: #5d606b; white-space: nowrap; }
.rng-sep { width: 1px; height: 22px; background: #e0e3eb; margin: 0 -1px 0 -3px; }
.rng-sep2 { margin: 0 -1px 0 -2px; }
.rng-time { margin-left: auto; }
.rng-pct { margin-left: -2px; }
.rng-auto { margin-left: 3px; }
.rng-gear { width: 15px; height: 15px; margin: 0 14px 0 2px; fill: #50535e; fill-rule: evenodd; }
.gapline { height: 6px; flex: none; }

/* taskbar */
.taskbar { height: 40px; flex: none; display: flex; align-items: center; background: linear-gradient(90deg, #cde4ec, #d2dbea); color: #111; }
.winlogo { width: 17px; height: 17px; margin-left: 16px; fill: #000; }
.search { width: 343px; height: 40px; margin-left: 15px; background: #fff; border: 1px solid #c8ccd0; border-bottom: 0; display: flex; align-items: center; position: relative; overflow: hidden; flex: none; }
.s-ic { width: 18px; height: 18px; margin-left: 10px; stroke: #111; stroke-width: 1.200; }
.s-txt { margin-left: 11px; font-size: 14px; color: #222; letter-spacing: -.1px; white-space: nowrap; }
.doodle { position: absolute; right: 2px; top: -1px; width: 76px; height: 40px; }
.d-hill { fill: #46b649; } .d-goal { stroke: #e0507a; stroke-width: 1; } .d-ball { fill: #dbe6f8; } .d-lines { stroke: #3f78d8; stroke-width: 1.500; }
.d-star { fill: #e58af0; } .d-sun { fill: #f5b21a; } .d-blue { fill: #5cc8e8; }
.cortana { width: 17px; height: 17px; margin-left: 15px; stroke: #111; stroke-width: 2.400; }
.taskview { width: 16px; height: 18px; margin: 0 0 0 32px; stroke: #111; stroke-width: 1.200; }
.app { width: 40px; height: 40px; margin-left: 9px; display: flex; align-items: center; justify-content: center; border-bottom: 2px solid #0a78d0; flex: none; }
.app svg { width: 24px; height: 24px; }
.taskview + .app { margin-left: 22px; }
.app-on { width: 48px; margin-left: 5px; background: #e4f0f5; }
.app-on + .app { margin-left: 5px; }
.tray { margin-left: auto; display: flex; align-items: center; height: 40px; position: relative; width: 490px; }
.tr { stroke: #111; stroke-width: 1; }
.tr-person { width: 16px; height: 16px; margin-left: 1px; }
.tr-weather { width: 24px; height: 20px; margin-left: 78px; }
.tr-t { font-size: 13.500px; color: #222; white-space: nowrap; letter-spacing: -.2px; }
.tr-temp { margin-left: 7px; width: 38px; }
.tr-rain { width: 60px; }
.tr-up { width: 12px; height: 7px; margin-left: 14.500px; }
.tr-net { width: 16px; height: 16px; margin-left: 11px; }
.tr-spk { width: 16px; height: 14px; margin-left: 8px; }
.tr-kbd { width: 23px; height: 14px; margin-left: 8px; }
.tr-lang, .tr-clock { display: flex; flex-direction: column; align-items: center; font-size: 12px; line-height: 17px; color: #222; white-space: nowrap; letter-spacing: -.2px; }
.tr-lang { width: 26px; margin-left: 9px; }
.tr-clock { width: 64px; margin-left: 6px; }
.tr-note { width: 18px; height: 16px; margin-left: 11px; }
```
FILE: chart.js
```js
(function () {
  var NS = 'http://www.w3.org/2000/svg';
  var svg = document.getElementById('canvas');
  function el(name, attrs, text) {
    var n = document.createElementNS(NS, name);
    for (var k in attrs) n.setAttribute(k, attrs[k]);
    if (text !== undefined) n.textContent = text;
    return n;
  }
  function add(parent, name, attrs, text) { var n = el(name, attrs, text); parent.appendChild(n); return n; }

  var L = 56, R = 1860, T = 110, B = 975;

  var defs = add(svg, 'defs', {});
  var cp = add(defs, 'clipPath', { id: 'plot' });
  add(cp, 'rect', { x: L + 1, y: T, width: R - L - 1, height: B - T });
  var cp2 = add(defs, 'clipPath', { id: 'axisclip' });
  add(cp2, 'rect', { x: R, y: T, width: 60, height: B - T });
  var cp3 = add(defs, 'clipPath', { id: 'timeclip' });
  add(cp3, 'rect', { x: L + 1, y: B, width: 1810, height: 25 });

  // price grid + axis labels
  for (var k = 0; k < 26; k++) {
    var y = Math.round(142.3 + 33.17 * k) + 0.5;
    add(svg, 'line', { 'class': 'grid', x1: L, x2: R, y1: y, y2: y });
  }
  // time grid
  var times = [
    [67.7, '14:30'], [158.5, '15:00'], [249.4, '16'], [386.4, '10:00'], [477.3, '10:30'], [568.2, '11:00'],
    [659.1, '11:30'], [750, '12:00'], [840.9, '12:30'], [931.8, '13:00'], [1022.7, '13:30'], [1113.5, '14:00'],
    [1204.4, '14:30'], [1295.3, '15:00'], [1386.4, '17'], [1522.5, '10:00'], [1613.4, '10:30'], [1704.3, '11:00'], [1795.2, '11:30']
  ];
  times.forEach(function (t) {
    var x = Math.round(t[0]) + 0.5;
    add(svg, 'line', { 'class': 'grid', x1: x, x2: x, y1: T, y2: B });
    add(svg, 'line', { 'class': 'tick', x1: x, x2: x, y1: B, y2: B + 4 });
  });
  add(svg, 'line', { 'class': 'frame', x1: L + 0.5, x2: L + 0.5, y1: 109, y2: 1000 });
  add(svg, 'line', { 'class': 'frame', x1: L, x2: 1917, y1: 109.5, y2: 109.5 });
  add(svg, 'line', { 'class': 'frame', x1: 1917.5, x2: 1917.5, y1: 109, y2: 1000 });

  // session breaks
  [249.5, 1386.5].forEach(function (x) {
    add(svg, 'line', { 'class': 'brk', x1: x, x2: x, y1: T, y2: B });
  });

  // [top, bottom, wickHigh, wickLow, up?]  starting at index -21 (0 = 16 Jun open)
  var d = [
    [327,329,321,333,1],[326,346,326,346,0],[339,345,331,345,1],[329,339,323,344,1],[329,342,329,342,0],[327,342,325,342,1],
    [328,335,327,341,0],[333,348,329,351,0],[347,349,344,354,0],[348,350,339,350,0],[335,350,331,350,1],[334,388,334,392,0],
    [380,390,373,393,1],[381,395,381,401,0],[394,396,385,400,0],[383,394,374,394,1],[378,385,378,387,1],[378,390,377,390,0],
    [388,390,382,390,1],[389,392,389,395,0],[391,398,390,401,0],
    [179,200,159,207,1],[178,182,173,188,0],[182,214,182,214,0],[214,232,211,238,0],[200,231,197,232,1],[194,202,177,204,1],
    [194,211,194,213,0],[209,231,208,232,0],[230,237,224,238,0],[237,252,236,260,0],[242,252,230,256,1],[243,257,243,269,0],
    [249,256,248,266,1],[248,258,248,270,0],[256,284,256,288,0],[283,289,269,294,0],[274,289,266,290,1],[270,274,263,282,1],
    [270,287,264,287,0],[287,300,276,302,0],[299,314,292,314,0],[308,315,306,319,1],[308,335,307,335,0],[321,334,321,341,1],
    [321,332,321,332,0],[332,346,331,347,0],[309,346,308,349,1],[309,337,304,337,0],[330,337,328,337,1],[331,358,329,360,0],
    [348,358,346,366,1],[342,349,342,359,1],[340,343,332,351,1],[333,341,332,344,1],[334,336,317,336,0],[334,347,328,347,0],
    [347,357,341,357,0],[356,381,356,385,0],[375,383,375,394,1],[374,380,368,385,0],[381,413,379,413,0],[410,457,410,457,0],
    [456,477,445,480,0],[459,478,451,480,1],[459,469,450,475,0],[452,470,451,476,1],[434,454,427,455,1],[436,463,435,468,0],
    [462,495,456,495,0],[480,496,476,506,1],[481,499,475,499,0],[500,522,499,522,0],[510,523,498,523,1],[507,512,499,514,1],
    [507,510,497,513,0],[508,539,508,539,0],[538,545,536,551,0],[544,573,544,573,0],[559,573,551,585,1],[543,559,542,561,1],
    [512,543,492,543,1],[513,534,509,537,0],[533,546,533,549,0],[545,554,534,561,0],[553,560,552,569,0],[531,562,531,569,1],
    [532,540,532,550,0],[539,541,527,542,1],[538,567,536,567,0],[566,574,566,596,0],[574,593,574,604,0],[589,594,588,607,1],
    [591,608,591,616,0],[607,628,607,628,0],[591,628,582,631,1],[590,637,590,637,0],[635,665,628,684,0],[660,686,655,689,0],
    [676,685,666,693,1],[675,681,671,693,0],[675,683,656,683,1],[675,708,674,708,0],[706,731,688,731,0],[729,738,725,749,0],
    [736,764,735,764,0],[764,769,752,812,0],[700,769,689,769,1],[670,699,670,708,1],[668,729,668,734,0],[725,731,713,746,1],
    [711,726,709,732,1],[695,711,689,714,1],[694,721,694,727,0],[720,726,714,732,0],[699,723,698,723,1],[700,721,698,722,0],
    [721,742,713,746,0],[742,757,736,760,0],[736,756,736,756,1],[736,772,722,772,0],[771,803,759,803,0],[802,819,797,821,0],
    [796,816,796,817,1],[764,796,763,813,1],[756,765,737,765,1],[755,782,747,786,0],[780,806,774,814,0],[803,838,801,838,0],
    [817,838,815,845,1],[818,827,806,830,0],[824,827,803,827,1],[824,839,813,839,0],[825,840,825,846,1],[784,827,784,828,1],
    [783,798,770,798,0],[800,802,778,805,0],[802,813,794,822,0],[809,813,804,823,1],[797,810,794,815,1],[797,827,788,827,0],
    [827,832,821,832,0],[832,853,829,858,0],[841,852,834,852,1],[843,846,839,847,0],[841,846,836,848,1],
    [941,966,870,975,0],[914,963,908,965,1],[913,950,891,950,0],[951,954,941,972,0],[951,975,951,975,0],null,null,
    [972,975,964,975,1],[912,975,908,975,1],[839,913,794,913,1],[831,837,808,860,1],[792,834,774,834,1],[791,837,785,837,0],
    [836,863,836,878,0],[838,864,838,888,1],[833,846,817,855,0],[845,873,843,876,0],[873,905,871,912,0],[904,934,891,946,0],
    [916,933,878,944,1],[907,917,900,929,1],[906,911,905,921,0],[911,916,887,917,0],[914,917,909,930,0],[913,918,903,922,1],
    [902,914,893,925,1],[891,904,887,910,1],[855,888,848,888,1],[852,856,851,863,1],[851,887,851,889,0],[886,889,871,895,0],
    [891,899,881,908,0],[868,898,867,898,1],[869,885,866,887,0],[880,886,878,900,1],[880,889,867,889,0],[883,890,878,897,1],
    [882,885,875,889,1],[875,884,864,884,1],[875,897,875,897,0],[886,896,872,907,1],[887,927,885,927,0],[925,945,909,958,0],
    [945,966,929,969,0],[965,975,953,975,0],[975,975,968,975,0],null,null,[975,975,972,975,0]
  ];
  var plot = add(svg, 'g', { 'clip-path': 'url(#plot)' });
  d.forEach(function (c, n) {
    if (!c) return;
    var x = Math.round(248.2 + 9.09 * (n - 21));
    add(plot, 'rect', { 'class': 'wick', x: x, y: c[2], width: 1, height: Math.max(0, c[3] - c[2]) });
    if (c[1] > c[0]) add(plot, 'rect', { 'class': c[4] ? 'up' : 'dn', x: x - 3, y: c[0], width: 7, height: c[1] - c[0] });
  });

  // moving average
  var ma = '57,310 80,312.7 106.700,316.7 130,321.7 148.300,327 166.700,336.7 185,346 200,351.7 213.300,355.7 239,362.3 258.300,346 276.700,336.7 293.300,324 316.700,310 340,298.3 353.300,288.3 372,273 386.400,267.7 404.300,256.7 430.400,245.3 449,258.3 465,267.3 493.600,286.7 504.300,291.7 529.300,306.7 557.900,317.7 575.700,324.3 611.400,344 629.300,359 656,378.3 667.500,382.3 682.900,396.7 713.400,420 738.600,443.3 767.100,473.3 793.900,496 813.600,506.7 831.400,515 842,518.3 877.900,536 895.700,546 920.700,557.7 949.300,577.7 960,582.7 976,594 999.300,620 1022.500,643.3 1038.600,655 1060,675 1076,684 1094,696 1119,709.3 1130,715 1140,717.3 1150,722.7 1176.700,739.3 1211.700,744.3 1231.700,758.3 1250,768.3 1266.700,779.3 1286.700,786.7 1310,797.7 1333.300,805 1366.700,813.3 1376.700,817.3 1386.700,827.7 1411.700,845 1430,865.7 1449.300,879.3 1463.300,885.300 1480,887.3 1500,889.3 1523.300,893.7 1540,898.3 1560,906 1585,906 1603.300,902 1616.700,893.3 1640,877.7 1646.700,877.7 1680,888.3 1703.300,892.3 1723.300,894.7 1746.700,891 1776.700,894.7 1806.700,908.3 1831.700,924.3 1859.300,938.3';
  add(plot, 'polyline', { 'class': 'ma', points: ma });

  // crosshair
  add(svg, 'line', { 'class': 'cross-v', x1: 713.5, x2: 713.5, y1: T, y2: B });
  add(svg, 'line', { 'class': 'cross-h', x1: L + 1, x2: 1843, y1: 589.5, y2: 589.5 });
  add(svg, 'circle', { 'class': 'cross-o', cx: 712.7, cy: 591.3, r: 6 });

  // axes
  add(svg, 'line', { 'class': 'axis', x1: 1860.5, x2: 1860.5, y1: T, y2: B + 1 });
  add(svg, 'line', { 'class': 'axis', x1: L + 1, x2: 1861, y1: B + 0.5, y2: B + 0.5 });

  // price labels
  var pg = add(svg, 'g', { 'clip-path': 'url(#axisclip)' });
  for (k = 0; k < 26; k++) {
    var py = Math.round(142.3 + 33.17 * k) + 0.5;
    add(pg, 'line', { 'class': 'tick', x1: 1861, x2: 1866, y1: py, y2: py });
    add(pg, 'text', { 'class': 'plabel', x: 1869, y: py + 4 }, (15875 - 25 * k).toFixed(2));
  }
  // time labels
  var tg = add(svg, 'g', { 'clip-path': 'url(#timeclip)' });
  times.forEach(function (t) {
    if (t[1] === '12:00') return;
    add(tg, 'text', { 'class': 'tlabel', x: t[0], y: 993 }, t[1]);
  });

  // tags over the axes
  add(svg, 'rect', { 'class': 'tag', x: 663, y: 976, width: 99, height: 21 });
  add(svg, 'text', { 'class': 'tagtxt tagmid', x: 712.5, y: 990 }, "16 Jun '22 · 11:48");
  add(svg, 'rect', { 'class': 'tag', x: 1843, y: 581, width: 17, height: 17 });
  add(svg, 'path', { 'class': 'tagplus', d: 'M1851.500 584v11M1846 589.500h11', fill: 'none' });
  add(svg, 'rect', { 'class': 'tag', x: 1862, y: 581, width: 57, height: 17 });
  add(svg, 'text', { 'class': 'tagtxt', x: 1869, y: 593 }, '15538.28');
})();
```
